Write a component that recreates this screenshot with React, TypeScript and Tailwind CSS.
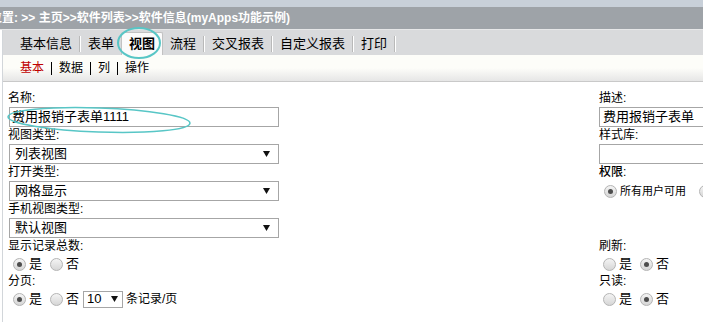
import React from 'react';

// 单选框
function Radio({ checked }: { checked?: boolean }) {
  return (
    <span className="inline-flex shrink-0 items-center justify-center w-[13px] h-[13px] rounded-full border border-[#b4b4b4] bg-gradient-to-b from-[#f4f4f4] to-[#d6d6d6]">
      {checked && <span className="w-[5px] h-[5px] rounded-full bg-[#4d4d4d]" />}
    </span>
  );
}

function RadioItem({ checked, label }: { checked?: boolean; label: string }) {
  return (
    <span className="inline-flex items-center gap-[3px] mr-[8px]">
      <Radio checked={checked} />
      <span className="text-[13px]">{label}</span>
    </span>
  );
}

// 下拉框
function Select({ value }: { value: string }) {
  return (
    <div className="flex items-center justify-between h-[20px] w-[270px] ml-px border border-[#a6a6a6] bg-white pl-[5px] pr-[8px] text-[13px]">
      <span>{value}</span>
      <svg width="7" height="6" viewBox="0 0 7 6">
        <path d="M0 0 H7 L3.5 6 Z" fill="#111" />
      </svg>
    </div>
  );
}

function Label({ children, bold }: { children: React.ReactNode; bold?: boolean }) {
  return <div className={`h-[17px] leading-[17px] text-[12px] ${bold ? 'font-medium' : ''}`}>{children}</div>;
}

const tabs = ['基本信息', '表单', '视图', '流程', '交叉报表', '自定义报表', '打印'];

function Sep() {
  return <span className="w-[2px] h-[16px] border-l border-[#b9b9b9] border-r border-r-white" />;
}

export default function App() {
  return (
    <div className="relative w-[703px] h-[322px] overflow-hidden bg-white text-black font-['Liberation_Sans','Noto_Sans_CJK_SC',sans-serif]">
      {/* 顶部 */}
      <div className="h-[7px] bg-[#c8d0d9]" />
      <div className="h-[22px] bg-[#9ea3a8] flex items-center text-white text-[12px] font-bold whitespace-nowrap">
        <span className="-ml-[10px]">位置: &gt;&gt; 主页&gt;&gt;软件列表&gt;&gt;软件信息(myApps功能示例)</span>
      </div>
      <div className="h-px bg-[#e6e7e8]" />

      <div className="ml-[2px] border-l border-[#d2d6da] h-full">
        {/* 主标签 */}
        <div className="h-[25px] bg-[#d9dadc] flex items-end pl-[10px] text-[13px]">
          {tabs.map((t, i) => {
            const active = t === '视图';
            const showSep = !active && tabs[i + 1] !== '视图';
            return (
              <React.Fragment key={t}>
                {active ? (
                  <span className="h-[23px] px-[7px] flex items-center bg-[#fbfbfb] border border-b-0 border-[#c2c2c2] rounded-t-[2px] font-bold">
                    {t}
                  </span>
                ) : (
                  <span className="h-[23px] px-[7px] flex items-center">{t}</span>
                )}
                {showSep && (
                  <span className="h-[23px] flex items-center">
                    <Sep />
                  </span>
                )}
              </React.Fragment>
            );
          })}
        </div>

        {/* 子标签 */}
        <div className="h-[27px] bg-gradient-to-b from-[#fdfdf9] from-50% to-[#e6e6e6] border-b border-[#c9c9c9] flex items-center pl-[17px] text-[12px]">
          <span className="text-[#c00000]">基本</span>
          <span className="w-px h-[13px] bg-black mx-[7px]" />
          <span>数据</span>
          <span className="w-px h-[13px] bg-black mx-[7px]" />
          <span>列</span>
          <span className="w-px h-[13px] bg-black mx-[7px]" />
          <span>操作</span>
        </div>

        {/* 表单 */}
        <div className="grid grid-cols-[271px_1fr] gap-x-[320px] pt-[8px] pl-[5px]">
          <div>
            <Label>名称:</Label>
            <div className="h-[20px] w-[270px] ml-px border border-[#a6a6a6] pl-[2px] text-[13px] leading-[18px]">费用报销子表单1111</div>
            <Label>视图类型:</Label>
            <Select value="列表视图" />
            <Label>打开类型:</Label>
            <Select value="网格显示" />
            <Label>手机视图类型:</Label>
            <Select value="默认视图" />
            <Label>显示记录总数:</Label>
            <div className="h-[18px] flex items-center pl-[5px]">
              <RadioItem checked label="是" />
              <RadioItem label="否" />
            </div>
            <Label>分页:</Label>
            <div className="h-[18px] flex items-center pl-[5px]">
              <RadioItem checked label="是" />
              <span className="inline-flex items-center gap-[3px] mr-[4px]">
                <Radio />
                <span className="text-[13px]">否</span>
              </span>
              <span className="inline-flex items-center justify-between h-[17px] w-[40px] border border-[#a6a6a6] pl-[3px] pr-[4px] text-[13px]">
                10
                <svg width="7" height="6" viewBox="0 0 7 6">
                  <path d="M0 0 H7 L3.5 6 Z" fill="#111" />
                </svg>
              </span>
              <span className="ml-[3px] text-[12px]">条记录/页</span>
            </div>
          </div>

          <div>
            <Label>描述:</Label>
            <div className="h-[20px] w-[140px] border border-[#a6a6a6] pl-[3px] text-[13px] leading-[18px]">费用报销子表单</div>
            <Label>样式库:</Label>
            <div className="h-[20px] w-[140px] border border-[#a6a6a6]" />
            <Label bold>权限:</Label>
            <div className="h-[20px] flex items-center pl-[5px] whitespace-nowrap">
              <span className="inline-flex items-center gap-[3px] mr-[13px]">
                <Radio checked />
                <span className="text-[11px]">所有用户可用</span>
              </span>
              <Radio />
            </div>
            <div className="h-[37px]" />
            <Label>刷新:</Label>
            <div className="h-[18px] flex items-center pl-[4px]">
              <RadioItem label="是" />
              <RadioItem checked label="否" />
            </div>
            <Label>只读:</Label>
            <div className="h-[18px] flex items-center pl-[4px]">
              <RadioItem label="是" />
              <RadioItem checked label="否" />
            </div>
          </div>
        </div>
      </div>

      {/* 标注圈 */}
      <svg className="absolute inset-0 pointer-events-none" width="703" height="322">
        <ellipse cx="139" cy="43" rx="21" ry="15" fill="none" stroke="#58c6c6" strokeWidth="2" />
        <ellipse cx="99" cy="120" rx="91" ry="12" fill="none" stroke="#58c6c6" strokeWidth="1.6" transform="rotate(2 99 120)" />
      </svg>
    </div>
  );
}
